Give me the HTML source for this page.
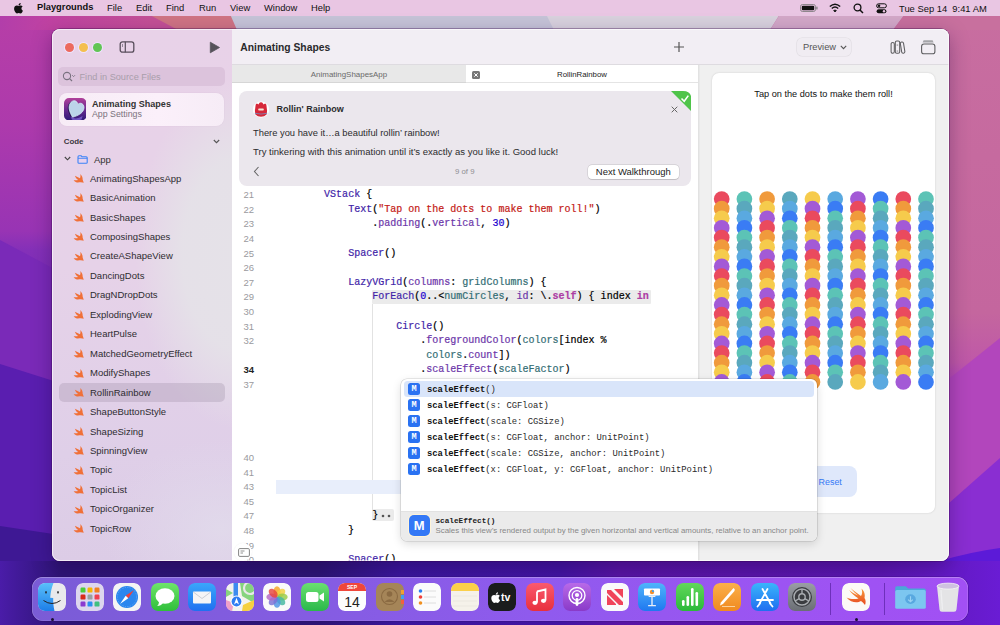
<!DOCTYPE html>
<html><head><meta charset="utf-8">
<style>
*{margin:0;padding:0;box-sizing:border-box}
html,body{width:1000px;height:625px;overflow:hidden;font-family:"Liberation Sans",sans-serif;}
body{position:relative;background:#6a2ab0}
.abs{position:absolute}
#wall{position:absolute;left:0;top:0;width:1000px;height:625px}
#menubar{position:absolute;left:0;top:0;width:1000px;height:16px;background:#e9c6e3;font-size:9.4px;color:#111}
#menubar span{position:absolute;top:2.3px;white-space:nowrap;font-size:9.4px}
#win{position:absolute;left:52px;top:29px;width:897px;height:532px;border-radius:8px;overflow:hidden;background:#fff;box-shadow:0 0 0 0.7px rgba(50,0,70,.45),0 6px 20px rgba(30,0,60,.35)}
#winborder{position:absolute;left:0;top:0;width:897px;height:532px;border-radius:8px;border:1px solid rgba(255,255,255,.6);pointer-events:none}
#side{position:absolute;left:0;top:0;width:180px;height:532px;background:radial-gradient(ellipse 105px 175px at 188px 225px,rgba(229,226,232,1) 0%,rgba(229,226,232,.92) 55%,rgba(229,226,232,0) 100%),radial-gradient(ellipse 120px 90px at 170px 500px,rgba(226,220,236,.8) 0%,rgba(226,220,236,0) 100%),linear-gradient(180deg,#e8d2e8 0%,#e6d2e8 45%,#dfcfe8 80%,#dccce6 100%)}
#editor{position:absolute;left:180px;top:0;width:466px;height:532px;background:#fff}
#preview{position:absolute;left:646px;top:0;width:251px;height:532px;background:#f0f0f0;box-shadow:inset 1.5px 0 0 #e2e2e2}
.tb{position:absolute;left:0;top:0;height:36px;background:#f2eef4;border-bottom:1px solid #dedbe0}
.mono{font-family:"Liberation Mono",monospace}
#dock{position:absolute;left:32px;top:577px;width:936px;height:43.5px;border-radius:11px;background:linear-gradient(90deg,#7a5cd6 0%,#865ce4 35%,#905aee 55%,#9c54f2 80%,#a250f4 100%);box-shadow:inset 0 0.8px 0 rgba(255,255,255,.25),inset 0 0 0 0.6px rgba(255,255,255,.2),0 0 0 0.6px rgba(40,10,90,.4)}
.ic{position:absolute;top:6px;width:28px;height:28px;border-radius:7px;overflow:hidden}
.tl{position:absolute;top:13.7px;width:9px;height:9px;margin-left:0.5px;border-radius:50%;box-shadow:0 0 0 1px rgba(238,228,255,.95)}
.row{position:absolute;left:0;width:180px;height:19px}
.row .sw{position:absolute;left:21px;top:5px;width:11.3px;height:9.2px}
.row span{position:absolute;left:38px;top:3.7px;font-size:9.5px;color:#2e2c30;white-space:nowrap}
#card{position:absolute;left:7px;top:62px;width:452px;height:95px;border-radius:8px;background:#ebe7ed}
.ln{position:absolute;left:0;width:22px;text-align:right;font-size:9.5px;color:#9a9a9e;height:14.6px;line-height:14.6px}
.ln.b{color:#222;font-weight:bold}
.cl{position:absolute;left:44px;font-size:10.02px;color:#000;white-space:pre;height:14.6px;line-height:14.6px;-webkit-text-stroke:0.2px currentColor}
.t{color:#3f1fa8}.m{color:#6c36a9}.v{color:#326d74}.k{color:#ad3da4;font-weight:bold}.n{color:#1c00cf}.s{color:#c41a16}
#popup{position:absolute;left:400.5px;top:378.5px;width:416px;height:162px;border-radius:6px;background:#fff;overflow:hidden;box-shadow:0 0 0 0.6px rgba(0,0,0,.16),0 3px 10px rgba(0,0,0,.14)}
.mi{position:absolute;left:7.5px;width:12px;height:12px;border-radius:2.5px;background:#2a72f2;color:#fff;font-family:"Liberation Mono",monospace;font-size:8.5px;font-weight:bold;text-align:center;line-height:12px}
.pt{position:absolute;left:26.5px;top:0;font-size:8.84px;color:#2a2a2a;white-space:pre;line-height:12px;margin-top:1px}
.pt b{color:#111}
</style></head>
<body>
<svg id="wall" viewBox="0 0 1000 625" preserveAspectRatio="none">
  <defs>
    <linearGradient id="gl" x1="0" y1="0" x2="0" y2="625" gradientUnits="userSpaceOnUse">
      <stop offset="0" stop-color="#b83fa6"/>
      <stop offset="0.2" stop-color="#ad3aac"/>
      <stop offset="0.37" stop-color="#9834b4"/>
      <stop offset="0.4" stop-color="#8430b8"/>
      <stop offset="0.56" stop-color="#6c26b4"/>
      <stop offset="0.6" stop-color="#5a1eb0"/>
      <stop offset="0.84" stop-color="#4a1aa4"/>
      <stop offset="0.9" stop-color="#3a1690"/>
      <stop offset="1" stop-color="#2a1270"/>
    </linearGradient>
    <linearGradient id="gr" x1="0" y1="0" x2="0" y2="625" gradientUnits="userSpaceOnUse">
      <stop offset="0" stop-color="#c86ea0"/>
      <stop offset="0.5" stop-color="#c4669e"/>
      <stop offset="0.58" stop-color="#bf58a8"/>
      <stop offset="0.62" stop-color="#b042c0"/>
      <stop offset="0.76" stop-color="#8c2ad4"/>
      <stop offset="0.88" stop-color="#6420d6"/>
      <stop offset="1" stop-color="#5418d2"/>
    </linearGradient>
    <linearGradient id="gb" x1="0" y1="0" x2="1000" y2="0" gradientUnits="userSpaceOnUse">
      <stop offset="0" stop-color="#4a1ca8"/>
      <stop offset="0.06" stop-color="#2e1476"/>
      <stop offset="0.32" stop-color="#2c1474"/>
      <stop offset="0.4" stop-color="#3a169c"/>
      <stop offset="0.56" stop-color="#4214a2"/>
      <stop offset="0.62" stop-color="#5814a4"/>
      <stop offset="0.88" stop-color="#5a16b0"/>
      <stop offset="1" stop-color="#6a1cd4"/>
    </linearGradient>
    <linearGradient id="gt" x1="0" y1="0" x2="1000" y2="0" gradientUnits="userSpaceOnUse">
      <stop offset="0" stop-color="#b23eaa"/>
      <stop offset="0.05" stop-color="#c042a2"/>
      <stop offset="0.15" stop-color="#c45096"/>
    </linearGradient>
  </defs>
  <rect x="0" y="0" width="500" height="625" fill="url(#gl)"/>
  <rect x="500" y="0" width="500" height="625" fill="url(#gr)"/>
  <path d="M0,240 L60,272 L60,625 L0,625 Z" fill="#7a2ab8"/>
  <path d="M0,364 L60,383 L60,625 L0,625 Z" fill="#5a1eb0"/>
  <path d="M0,526 L60,535 L60,625 L0,625 Z" fill="#3e1894"/>
  <path d="M940,386 L1000,338 L1000,625 L940,625 Z" fill="#b246bc"/>
  <path d="M940,511 L1000,458 L1000,625 L940,625 Z" fill="#8a2ed2"/>
  <path d="M940,561 Q970,552 1000,548 L1000,625 L940,625 Z" fill="#5c1ad8"/>
  <rect x="0" y="561" width="1000" height="64" fill="url(#gb)"/>
  <rect x="0" y="14" width="240" height="16" fill="url(#gt)"/>
  <path d="M148,14 L232,14 L240,30 L178,30 Z" fill="#d07484"/>
  <path d="M230,14 L548,14 L556,30 L237,30 Z" fill="#c6c4d8"/>
  <path d="M546,14 L780,14 L770,30 L554,30 Z" fill="#d9d2de"/>
  <path d="M780,14 L905,14 L893,30 L770,30 Z" fill="#d3a8c8"/>
  <path d="M905,14 L1000,14 L1000,30 L893,30 Z" fill="#c8709e"/>
</svg>

<div id="menubar">
  <svg class="abs" style="left:14px;top:3px" width="9" height="11" viewBox="0 0 384 470"><path transform="translate(0,-32)" d="M318.7 268.7c-.2-36.7 16.4-64.4 50-84.8-18.8-26.9-47.2-41.7-84.7-44.6-35.5-2.8-74.3 20.7-88.5 20.7-15 0-49.4-19.7-76.4-19.7C63.3 141.2 4 184.8 4 273.5q0 39.3 14.4 81.2c12.8 36.7 59 126.7 107.2 125.2 25.2-.6 43-17.9 75.8-17.9 31.8 0 48.3 17.9 76.4 17.9 48.6-.7 90.4-82.5 102.6-119.3-65.2-30.7-61.7-90-61.7-91.9zm-56.6-164.2c27.3-32.4 24.8-61.9 24-72.5-24.1 1.4-52 16.4-67.9 34.9-17.5 19.8-27.8 44.3-25.6 71.9 26.1 2 49.9-11.4 69.5-34.3z" fill="#111"/></svg>
  <span style="left:37px;font-weight:bold;font-size:9.3px">Playgrounds</span>
  <span style="left:107px">File</span>
  <span style="left:136px">Edit</span>
  <span style="left:166px">Find</span>
  <span style="left:199px">Run</span>
  <span style="left:230px">View</span>
  <span style="left:264px">Window</span>
  <span style="left:311px">Help</span>
  <svg class="abs" style="left:800px;top:4px" width="18" height="8" viewBox="0 0 18 8"><rect x="0.5" y="0.5" width="15" height="7" rx="2" fill="none" stroke="#777" stroke-width="0.8"/><rect x="1.8" y="1.8" width="12.4" height="4.4" rx="1" fill="#111"/><rect x="16.3" y="2.6" width="1.2" height="2.8" rx="0.5" fill="#777"/></svg>
  <svg class="abs" style="left:829px;top:3px" width="12" height="10" viewBox="0 0 12 10"><path d="M0.8,3.6 Q6,-1 11.2,3.6" fill="none" stroke="#111" stroke-width="1.4"/><path d="M2.8,5.6 Q6,2.6 9.2,5.6" fill="none" stroke="#111" stroke-width="1.4"/><path d="M4.6,7.6 L6,9 L7.4,7.6 Q6,6.4 4.6,7.6 Z" fill="#111" stroke="#111" stroke-width="0.8"/></svg>
  <svg class="abs" style="left:853px;top:3px" width="11" height="11" viewBox="0 0 11 11"><circle cx="4.5" cy="4.5" r="3.4" fill="none" stroke="#111" stroke-width="1.3"/><path d="M7,7 L10,10" stroke="#111" stroke-width="1.5"/></svg>
  <svg class="abs" style="left:876px;top:3px" width="11" height="11" viewBox="0 0 11 11"><rect x="0.6" y="0.8" width="9.8" height="4" rx="2" fill="none" stroke="#111" stroke-width="1"/><circle cx="3" cy="2.8" r="1.3" fill="#111"/><rect x="0.6" y="6.2" width="9.8" height="4" rx="2" fill="#111"/><circle cx="8" cy="8.2" r="1.2" fill="#e9c4e2"/></svg>
  <span style="left:899px;font-size:9.4px;top:2.8px">Tue Sep 14&nbsp;&nbsp;9:41 AM</span>
</div>

<div id="win">
  <div id="side">
    <svg width="0" height="0" style="position:absolute"><defs>
      <path id="swift" fill="#f07038" d="M0.6,6 C2,8 4,8.6 6.5,8.2 C8,8 9.5,8.2 10.5,8.6 C10.2,7.6 9.6,6.5 9.4,5.5 C9.6,3.4 8.6,1.4 7.1,0 C7.4,1.4 7.4,2.8 6.8,4.1 C5.2,3 3.4,2.4 1.8,1.6 C2.4,3.4 3.6,4.8 5.1,5.8 C3.6,6.1 2,6.2 0.6,6 Z"/>
    </defs></svg>
    <div class="tl" style="left:12.4px;background:#ec6a5e"></div>
    <div class="tl" style="left:26.4px;background:#f4bf4f"></div>
    <div class="tl" style="left:40.4px;background:#61c554"></div>
    <svg class="abs" style="left:67px;top:11.5px" width="16" height="12" viewBox="0 0 16 12"><rect x="1.2" y="0.8" width="13.6" height="10.4" rx="2.3" fill="none" stroke="#594f5c" stroke-width="1.3"/><line x1="6.3" y1="0.8" x2="6.3" y2="11.2" stroke="#594f5c" stroke-width="1.2"/><line x1="3.5" y1="3" x2="3.5" y2="6" stroke="#8a8090" stroke-width="0.9"/></svg>
    <svg class="abs" style="left:157px;top:12px" width="12" height="13" viewBox="0 0 12 13"><path d="M1.3,1.2 L10.5,6.5 L1.3,11.8 Z" fill="#56525a" stroke="#56525a" stroke-width="0.8" stroke-linejoin="round"/></svg>
    <div class="abs" style="left:6px;top:38px;width:167px;height:19px;border-radius:5px;background:rgba(160,120,160,.16)"></div>
    <svg class="abs" style="left:10px;top:42px" width="14" height="12" viewBox="0 0 14 12"><circle cx="5" cy="5" r="3.6" fill="none" stroke="#7a7280" stroke-width="1.1"/><line x1="7.6" y1="7.6" x2="10" y2="10" stroke="#7a7280" stroke-width="1.2"/><path d="M10.2,4.2 L11.6,5.6 L13,4.2" fill="none" stroke="#7a7280" stroke-width="0.9"/></svg>
    <div class="abs" style="left:27.5px;top:43px;font-size:9.2px;color:#a99eab;white-space:nowrap">Find in Source Files</div>
    <div class="abs" style="left:7px;top:63.5px;width:165px;height:33px;border-radius:8px;background:linear-gradient(90deg,#f7ecf6,#fbf0fa 60%,#f6ecf6);box-shadow:0 0 1px rgba(120,80,120,.2)"></div>
    <svg class="abs" style="left:11.8px;top:68.8px" width="22.5" height="22.5" viewBox="0 0 23 23"><defs><linearGradient id="aig" x1="0" y1="0" x2="0" y2="1"><stop offset="0" stop-color="#b0409a"/><stop offset="0.5" stop-color="#6a2a90"/><stop offset="1" stop-color="#2e1a78"/></linearGradient></defs><rect x="0" y="0" width="23" height="23" rx="5.2" fill="url(#aig)"/><g transform="translate(11.8,12) rotate(22) scale(0.95,1.1) translate(-8,-7.5)"><path d="M8,15 C3,11.5 0,8.5 0,4.8 C0,2 2,0 4.4,0 C6,0 7.3,0.9 8,2.2 C8.7,0.9 10,0 11.6,0 C14,0 16,2 16,4.8 C16,8.5 13,11.5 8,15 Z" fill="#2a1458" transform="translate(-1.2,0.8)"/><path d="M8,15 C3,11.5 0,8.5 0,4.8 C0,2 2,0 4.4,0 C6,0 7.3,0.9 8,2.2 C8.7,0.9 10,0 11.6,0 C14,0 16,2 16,4.8 C16,8.5 13,11.5 8,15 Z" fill="#bcd4ea" stroke="#d8f2fa" stroke-width="0.7"/></g><path d="M7,19 Q12,23 19,18.5 L18,22 Q12,24 8,22 Z" fill="#8a6ae0" opacity=".7"/></svg>
    <div class="abs" style="left:40px;top:70px;font-size:9.05px;font-weight:bold;color:#333;white-space:nowrap">Animating Shapes</div>
    <div class="abs" style="left:40px;top:79.5px;font-size:8.8px;color:#7a727c;white-space:nowrap">App Settings</div>
    <div class="abs" style="left:11.7px;top:108px;font-size:7.9px;font-weight:bold;color:#3c3840">Code</div>
    <svg class="abs" style="left:160.5px;top:110px" width="7" height="5" viewBox="0 0 7 5"><path d="M0.8,1 L3.5,3.7 L6.2,1" fill="none" stroke="#555" stroke-width="1.1"/></svg>
    <svg class="abs" style="left:12px;top:127px" width="7" height="5" viewBox="0 0 7 5"><path d="M0.8,1 L3.5,3.8 L6.2,1" fill="none" stroke="#444" stroke-width="1.1"/></svg>
    <svg class="abs" style="left:25px;top:125.5px" width="11" height="9" viewBox="0 0 11 9"><path d="M1,2 C1,1.2 1.4,0.8 2,0.8 L4.2,0.8 L5,1.8 L9.2,1.8 C9.8,1.8 10.2,2.2 10.2,2.8 L10.2,7.4 C10.2,8 9.8,8.3 9.2,8.3 L2,8.3 C1.4,8.3 1,8 1,7.4 Z" fill="#e8d2ee" stroke="#3b82f6" stroke-width="1.1"/><line x1="1" y1="3.3" x2="10.2" y2="3.3" stroke="#3b82f6" stroke-width="0.9"/></svg>
    <div class="abs" style="left:42px;top:125px;font-size:9.5px;color:#333">App</div>
    <div class="abs" style="left:6.5px;top:354px;width:166px;height:19px;border-radius:5px;background:rgba(120,105,130,.2)"></div>
<div class="row" style="top:140.0px"><svg class="sw" viewBox="0 0 11 9"><use href="#swift"/></svg><span>AnimatingShapesApp</span></div>
<div class="row" style="top:159.4px"><svg class="sw" viewBox="0 0 11 9"><use href="#swift"/></svg><span>BasicAnimation</span></div>
<div class="row" style="top:178.9px"><svg class="sw" viewBox="0 0 11 9"><use href="#swift"/></svg><span>BasicShapes</span></div>
<div class="row" style="top:198.3px"><svg class="sw" viewBox="0 0 11 9"><use href="#swift"/></svg><span>ComposingShapes</span></div>
<div class="row" style="top:217.8px"><svg class="sw" viewBox="0 0 11 9"><use href="#swift"/></svg><span>CreateAShapeView</span></div>
<div class="row" style="top:237.2px"><svg class="sw" viewBox="0 0 11 9"><use href="#swift"/></svg><span>DancingDots</span></div>
<div class="row" style="top:256.7px"><svg class="sw" viewBox="0 0 11 9"><use href="#swift"/></svg><span>DragNDropDots</span></div>
<div class="row" style="top:276.1px"><svg class="sw" viewBox="0 0 11 9"><use href="#swift"/></svg><span>ExplodingView</span></div>
<div class="row" style="top:295.6px"><svg class="sw" viewBox="0 0 11 9"><use href="#swift"/></svg><span>HeartPulse</span></div>
<div class="row" style="top:315.0px"><svg class="sw" viewBox="0 0 11 9"><use href="#swift"/></svg><span>MatchedGeometryEffect</span></div>
<div class="row" style="top:334.5px"><svg class="sw" viewBox="0 0 11 9"><use href="#swift"/></svg><span>ModifyShapes</span></div>
<div class="row" style="top:353.9px"><svg class="sw" viewBox="0 0 11 9"><use href="#swift"/></svg><span>RollinRainbow</span></div>
<div class="row" style="top:373.4px"><svg class="sw" viewBox="0 0 11 9"><use href="#swift"/></svg><span>ShapeButtonStyle</span></div>
<div class="row" style="top:392.9px"><svg class="sw" viewBox="0 0 11 9"><use href="#swift"/></svg><span>ShapeSizing</span></div>
<div class="row" style="top:412.3px"><svg class="sw" viewBox="0 0 11 9"><use href="#swift"/></svg><span>SpinningView</span></div>
<div class="row" style="top:431.8px"><svg class="sw" viewBox="0 0 11 9"><use href="#swift"/></svg><span>Topic</span></div>
<div class="row" style="top:451.2px"><svg class="sw" viewBox="0 0 11 9"><use href="#swift"/></svg><span>TopicList</span></div>
<div class="row" style="top:470.6px"><svg class="sw" viewBox="0 0 11 9"><use href="#swift"/></svg><span>TopicOrganizer</span></div>
<div class="row" style="top:490.1px"><svg class="sw" viewBox="0 0 11 9"><use href="#swift"/></svg><span>TopicRow</span></div>
  </div>
  <div id="editor">
    <div class="tb" style="width:466px"></div>
    <div class="abs" style="left:8.3px;top:13px;font-size:10.3px;font-weight:bold;color:#2a2a2c;white-space:nowrap">Animating Shapes</div>
    <svg class="abs" style="left:441px;top:12px" width="12" height="12" viewBox="0 0 12 12"><path d="M6,1 V11 M1,6 H11" stroke="#555" stroke-width="1.2"/></svg>
    <div class="abs" style="left:0;top:36px;width:234px;height:18px;background:#e8e8e8;border-bottom:1.5px solid #d6d6d6"></div>
    <div class="abs" style="left:234px;top:36px;width:232px;height:18px;background:#fff;border-bottom:1px solid #e4e4e4"></div>
    <div class="abs" style="left:0;top:41px;width:234px;text-align:center;font-size:7.95px;color:#6a6a6a">AnimatingShapesApp</div>
    <div class="abs" style="left:234px;top:41px;width:232px;text-align:center;font-size:7.8px;color:#222">RollinRainbow</div>
    <svg class="abs" style="left:240px;top:42px" width="8" height="8" viewBox="0 0 8 8"><rect x="0" y="0" width="8" height="8" rx="1.5" fill="#777"/><path d="M2.3,2.3 L5.7,5.7 M5.7,2.3 L2.3,5.7" stroke="#fff" stroke-width="1"/></svg>
    <div id="card">
      <svg class="abs" style="left:431.5px;top:0" width="20.5" height="20.5" viewBox="0 0 20.5 20.5"><path d="M0,0 H12 Q20.5,0 20.5,8.5 V20.5 Z" fill="#4fc44a"/><path d="M10.5,7.5 L13.2,10.2 L17.3,4.6" fill="none" stroke="#fff" stroke-width="1.6"/></svg>
      <svg class="abs" style="left:432px;top:15px" width="7" height="7" viewBox="0 0 7 7"><path d="M0.7,0.7 L6.3,6.3 M6.3,0.7 L0.7,6.3" stroke="#666" stroke-width="1"/></svg>
      <svg class="abs" style="left:14px;top:10px" width="16" height="17" viewBox="0 0 16 17"><circle cx="8" cy="8.6" r="8.1" fill="#fff"/><path d="M2.5,5 Q2.3,3 3.8,2.4 Q5,2.6 5.4,3.6 Q6.5,1 8,1.2 Q9.5,1 10.6,3.6 Q11,2.6 12.2,2.4 Q13.7,3 13.5,5 Q14.6,10 13.6,13.6 Q11.5,15.8 8,15.8 Q4.5,15.8 2.4,13.6 Q1.4,10 2.5,5 Z" fill="#d6283a"/><rect x="5.2" y="7.6" width="5.6" height="2" rx="0.8" fill="#f2e6d6"/><path d="M1.8,12.3 Q8,13.8 14.2,12.3" stroke="#7a88b8" stroke-width="1" fill="none" opacity=".85"/></svg>
      <div class="abs" style="left:37.5px;top:12.5px;font-size:9px;font-weight:bold;color:#2c2c2e;white-space:nowrap">Rollin' Rainbow</div>
      <div class="abs" style="left:14px;top:36.7px;font-size:9.36px;color:#2c2c2e;white-space:nowrap">There you have it…a beautiful rollin’ rainbow!</div>
      <div class="abs" style="left:14px;top:55px;font-size:9.52px;color:#2c2c2e;white-space:nowrap">Try tinkering with this animation until it’s exactly as you like it. Good luck!</div>
      <svg class="abs" style="left:14px;top:75px" width="7" height="11" viewBox="0 0 7 11"><path d="M5.5,1 L1.5,5.5 L5.5,10" fill="none" stroke="#666" stroke-width="1.1"/></svg>
      <div class="abs" style="left:216px;top:76px;font-size:7.8px;color:#8e8e93;white-space:nowrap">9 of 9</div>
      <div class="abs" style="left:349px;top:73.7px;width:90.5px;height:14.8px;border-radius:4px;background:#fff;box-shadow:0 0 0 0.5px rgba(0,0,0,.16),0 0.5px 0.8px rgba(0,0,0,.1);font-size:9.47px;color:#222;text-align:center;line-height:13.6px">Next Walkthrough</div>
    </div>
    <div class="abs" style="left:140px;top:260.5px;width:279px;height:14px;background:#ebebeb;border-radius:1px"></div>
    <div class="abs" style="left:140px;top:274.5px;width:1px;height:206px;background:#e2e2e2"></div>
    <div class="abs" style="left:44px;top:450.5px;width:170px;height:14.3px;background:#e8eefb"></div>
    <div class="abs" style="left:140px;top:480px;width:22px;height:12px;background:#ebebeb;border-radius:2px"></div>
    <svg class="abs" style="left:148px;top:484.5px" width="12" height="4" viewBox="0 0 12 4"><circle cx="3" cy="2" r="1.3" fill="#555"/><circle cx="9" cy="2" r="1.3" fill="#555"/></svg>
<div class="ln" style="top:159.2px">21</div>
<div class="cl mono" style="top:159.2px">        <span class="t">VStack</span> {</div>
<div class="ln" style="top:173.8px">22</div>
<div class="cl mono" style="top:173.8px">            <span class="t">Text</span>(<span class="s">"Tap on the dots to make them roll!"</span>)</div>
<div class="ln" style="top:188.4px">23</div>
<div class="cl mono" style="top:188.4px">                .<span class="m">padding</span>(.<span class="m">vertical</span>, <span class="n">30</span>)</div>
<div class="ln" style="top:203.0px">24</div>
<div class="ln" style="top:217.6px">25</div>
<div class="cl mono" style="top:217.6px">            <span class="t">Spacer</span>()</div>
<div class="ln" style="top:232.2px">26</div>
<div class="ln" style="top:246.8px">27</div>
<div class="cl mono" style="top:246.8px">            <span class="t">LazyVGrid</span>(<span class="m">columns</span>: <span class="v">gridColumns</span>) {</div>
<div class="ln" style="top:261.4px">29</div>
<div class="cl mono" style="top:261.4px">                <span class="t">ForEach</span>(<span class="n">0</span>..&lt;<span class="v">numCircles</span>, <span class="m">id</span>: \.<span class="k">self</span>) { index <span class="k">in</span></div>
<div class="ln" style="top:276.0px">30</div>
<div class="ln" style="top:290.6px">31</div>
<div class="cl mono" style="top:290.6px">                    <span class="t">Circle</span>()</div>
<div class="ln" style="top:305.2px">32</div>
<div class="cl mono" style="top:305.2px">                        .<span class="m">foregroundColor</span>(<span class="v">colors</span>[index %</div>
<div class="cl mono" style="top:319.8px">                         <span class="v">colors</span>.<span class="m">count</span>])</div>
<div class="ln b" style="top:334.4px">34</div>
<div class="cl mono" style="top:334.4px">                        .<span class="m">scaleEffect</span>(<span class="v">scaleFactor</span>)</div>
<div class="ln" style="top:349.0px">37</div>
<div class="ln" style="top:422.0px">40</div>
<div class="ln" style="top:436.6px">41</div>
<div class="ln" style="top:451.2px">43</div>
<div class="ln" style="top:465.8px">45</div>
<div class="ln" style="top:480.4px">47</div>
<div class="cl mono" style="top:480.4px">                }</div>
<div class="ln" style="top:495.0px">48</div>
<div class="cl mono" style="top:495.0px">            }</div>
<div class="ln" style="top:509.6px">49</div>
<div class="ln" style="top:524.2px">50</div>
<div class="cl mono" style="top:524.2px">            <span class="t">Spacer</span>()</div>
    <div class="abs" style="left:2px;top:513.5px;width:18px;height:18px;border-radius:50%;background:#fff;box-shadow:0 0 1.5px rgba(0,0,0,.08)"></div><svg class="abs" style="left:6px;top:518.5px" width="12" height="9" viewBox="0 0 12 9"><rect x="0.6" y="0.6" width="10.8" height="7.8" rx="1.2" fill="none" stroke="#777" stroke-width="0.9"/><path d="M2.5,3 H6.5 M2.5,5 H5" stroke="#777" stroke-width="0.8"/></svg>
  </div>
  <div id="preview">
    <div class="tb" style="width:251px"></div>
    <div class="abs" style="left:99px;top:8.7px;width:53.6px;height:18.7px;border-radius:5px;background:#f0ecf2;box-shadow:0 0 0 0.6px rgba(0,0,0,.08)"></div>
    <div class="abs" style="left:105px;top:13px;font-size:9.3px;color:#555">Preview</div>
    <svg class="abs" style="left:142px;top:16px" width="7" height="5" viewBox="0 0 7 5"><path d="M0.8,0.8 L3.5,3.6 L6.2,0.8" fill="none" stroke="#555" stroke-width="1.1"/></svg>
    <svg class="abs" style="left:192px;top:11px" width="17" height="14" viewBox="0 0 17 14"><g fill="none" stroke="#5e5e60" stroke-width="1.05"><rect x="1.1" y="2.4" width="3.2" height="10.9" rx="1.6"/><rect x="5.3" y="0.9" width="4.4" height="12.4" rx="1.5"/><rect x="11" y="2" width="3.2" height="11.3" rx="1.6" transform="rotate(-9 12.6 7.6)"/></g><rect x="6.6" y="4.6" width="1.6" height="0.9" fill="#7a7a7c"/><rect x="6.6" y="10.6" width="1.6" height="0.9" fill="#7a7a7c"/></svg>
    <svg class="abs" style="left:222px;top:10px" width="16" height="16" viewBox="0 0 16 16"><path d="M3.6,1.2 H12.6 L13.6,3.6 H2.6 Z" fill="#a4a4a8"/><rect x="1.6" y="5" width="13.3" height="9.8" rx="2.4" fill="none" stroke="#5e5e60" stroke-width="1.1"/></svg>
    <div class="abs" style="left:14px;top:44px;width:223px;height:440px;background:#fff;border-radius:7px;box-shadow:0 0 2px rgba(0,0,0,.16);overflow:hidden">
      <div class="abs" style="left:0;top:16px;width:223px;text-align:center;font-size:9.2px;color:#111">Tap on the dots to make them roll!</div>
<svg class="abs" style="left:0;top:0" width="223" height="440"><circle cx="9.70" cy="126.00" r="7.85" fill="#ea4a5e"/><circle cx="32.40" cy="126.00" r="7.85" fill="#5cc3b6"/><circle cx="55.10" cy="126.00" r="7.85" fill="#f09a3c"/><circle cx="77.80" cy="126.00" r="7.85" fill="#5aa8bd"/><circle cx="100.50" cy="126.00" r="7.85" fill="#f6cb4c"/><circle cx="123.20" cy="126.00" r="7.85" fill="#5aa9e0"/><circle cx="145.90" cy="126.00" r="7.85" fill="#a35ad6"/><circle cx="168.60" cy="126.00" r="7.85" fill="#3a7cf4"/><circle cx="191.30" cy="126.00" r="7.85" fill="#ea4a5e"/><circle cx="214.00" cy="126.00" r="7.85" fill="#5cc3b6"/><circle cx="9.70" cy="135.63" r="7.85" fill="#f09a3c"/><circle cx="32.40" cy="135.63" r="7.85" fill="#5aa8bd"/><circle cx="55.10" cy="135.63" r="7.85" fill="#f6cb4c"/><circle cx="77.80" cy="135.63" r="7.85" fill="#5aa9e0"/><circle cx="100.50" cy="135.63" r="7.85" fill="#a35ad6"/><circle cx="123.20" cy="135.63" r="7.85" fill="#3a7cf4"/><circle cx="145.90" cy="135.63" r="7.85" fill="#ea4a5e"/><circle cx="168.60" cy="135.63" r="7.85" fill="#5cc3b6"/><circle cx="191.30" cy="135.63" r="7.85" fill="#f09a3c"/><circle cx="214.00" cy="135.63" r="7.85" fill="#5aa8bd"/><circle cx="9.70" cy="145.26" r="7.85" fill="#f6cb4c"/><circle cx="32.40" cy="145.26" r="7.85" fill="#5aa9e0"/><circle cx="55.10" cy="145.26" r="7.85" fill="#a35ad6"/><circle cx="77.80" cy="145.26" r="7.85" fill="#3a7cf4"/><circle cx="100.50" cy="145.26" r="7.85" fill="#ea4a5e"/><circle cx="123.20" cy="145.26" r="7.85" fill="#5cc3b6"/><circle cx="145.90" cy="145.26" r="7.85" fill="#f09a3c"/><circle cx="168.60" cy="145.26" r="7.85" fill="#5aa8bd"/><circle cx="191.30" cy="145.26" r="7.85" fill="#f6cb4c"/><circle cx="214.00" cy="145.26" r="7.85" fill="#5aa9e0"/><circle cx="9.70" cy="154.89" r="7.85" fill="#a35ad6"/><circle cx="32.40" cy="154.89" r="7.85" fill="#3a7cf4"/><circle cx="55.10" cy="154.89" r="7.85" fill="#ea4a5e"/><circle cx="77.80" cy="154.89" r="7.85" fill="#5cc3b6"/><circle cx="100.50" cy="154.89" r="7.85" fill="#f09a3c"/><circle cx="123.20" cy="154.89" r="7.85" fill="#5aa8bd"/><circle cx="145.90" cy="154.89" r="7.85" fill="#f6cb4c"/><circle cx="168.60" cy="154.89" r="7.85" fill="#5aa9e0"/><circle cx="191.30" cy="154.89" r="7.85" fill="#a35ad6"/><circle cx="214.00" cy="154.89" r="7.85" fill="#3a7cf4"/><circle cx="9.70" cy="164.52" r="7.85" fill="#ea4a5e"/><circle cx="32.40" cy="164.52" r="7.85" fill="#5cc3b6"/><circle cx="55.10" cy="164.52" r="7.85" fill="#f09a3c"/><circle cx="77.80" cy="164.52" r="7.85" fill="#5aa8bd"/><circle cx="100.50" cy="164.52" r="7.85" fill="#f6cb4c"/><circle cx="123.20" cy="164.52" r="7.85" fill="#5aa9e0"/><circle cx="145.90" cy="164.52" r="7.85" fill="#a35ad6"/><circle cx="168.60" cy="164.52" r="7.85" fill="#3a7cf4"/><circle cx="191.30" cy="164.52" r="7.85" fill="#ea4a5e"/><circle cx="214.00" cy="164.52" r="7.85" fill="#5cc3b6"/><circle cx="9.70" cy="174.15" r="7.85" fill="#f09a3c"/><circle cx="32.40" cy="174.15" r="7.85" fill="#5aa8bd"/><circle cx="55.10" cy="174.15" r="7.85" fill="#f6cb4c"/><circle cx="77.80" cy="174.15" r="7.85" fill="#5aa9e0"/><circle cx="100.50" cy="174.15" r="7.85" fill="#a35ad6"/><circle cx="123.20" cy="174.15" r="7.85" fill="#3a7cf4"/><circle cx="145.90" cy="174.15" r="7.85" fill="#ea4a5e"/><circle cx="168.60" cy="174.15" r="7.85" fill="#5cc3b6"/><circle cx="191.30" cy="174.15" r="7.85" fill="#f09a3c"/><circle cx="214.00" cy="174.15" r="7.85" fill="#5aa8bd"/><circle cx="9.70" cy="183.78" r="7.85" fill="#f6cb4c"/><circle cx="32.40" cy="183.78" r="7.85" fill="#5aa9e0"/><circle cx="55.10" cy="183.78" r="7.85" fill="#a35ad6"/><circle cx="77.80" cy="183.78" r="7.85" fill="#3a7cf4"/><circle cx="100.50" cy="183.78" r="7.85" fill="#ea4a5e"/><circle cx="123.20" cy="183.78" r="7.85" fill="#5cc3b6"/><circle cx="145.90" cy="183.78" r="7.85" fill="#f09a3c"/><circle cx="168.60" cy="183.78" r="7.85" fill="#5aa8bd"/><circle cx="191.30" cy="183.78" r="7.85" fill="#f6cb4c"/><circle cx="214.00" cy="183.78" r="7.85" fill="#5aa9e0"/><circle cx="9.70" cy="193.41" r="7.85" fill="#a35ad6"/><circle cx="32.40" cy="193.41" r="7.85" fill="#3a7cf4"/><circle cx="55.10" cy="193.41" r="7.85" fill="#ea4a5e"/><circle cx="77.80" cy="193.41" r="7.85" fill="#5cc3b6"/><circle cx="100.50" cy="193.41" r="7.85" fill="#f09a3c"/><circle cx="123.20" cy="193.41" r="7.85" fill="#5aa8bd"/><circle cx="145.90" cy="193.41" r="7.85" fill="#f6cb4c"/><circle cx="168.60" cy="193.41" r="7.85" fill="#5aa9e0"/><circle cx="191.30" cy="193.41" r="7.85" fill="#a35ad6"/><circle cx="214.00" cy="193.41" r="7.85" fill="#3a7cf4"/><circle cx="9.70" cy="203.04" r="7.85" fill="#ea4a5e"/><circle cx="32.40" cy="203.04" r="7.85" fill="#5cc3b6"/><circle cx="55.10" cy="203.04" r="7.85" fill="#f09a3c"/><circle cx="77.80" cy="203.04" r="7.85" fill="#5aa8bd"/><circle cx="100.50" cy="203.04" r="7.85" fill="#f6cb4c"/><circle cx="123.20" cy="203.04" r="7.85" fill="#5aa9e0"/><circle cx="145.90" cy="203.04" r="7.85" fill="#a35ad6"/><circle cx="168.60" cy="203.04" r="7.85" fill="#3a7cf4"/><circle cx="191.30" cy="203.04" r="7.85" fill="#ea4a5e"/><circle cx="214.00" cy="203.04" r="7.85" fill="#5cc3b6"/><circle cx="9.70" cy="212.67" r="7.85" fill="#f09a3c"/><circle cx="32.40" cy="212.67" r="7.85" fill="#5aa8bd"/><circle cx="55.10" cy="212.67" r="7.85" fill="#f6cb4c"/><circle cx="77.80" cy="212.67" r="7.85" fill="#5aa9e0"/><circle cx="100.50" cy="212.67" r="7.85" fill="#a35ad6"/><circle cx="123.20" cy="212.67" r="7.85" fill="#3a7cf4"/><circle cx="145.90" cy="212.67" r="7.85" fill="#ea4a5e"/><circle cx="168.60" cy="212.67" r="7.85" fill="#5cc3b6"/><circle cx="191.30" cy="212.67" r="7.85" fill="#f09a3c"/><circle cx="214.00" cy="212.67" r="7.85" fill="#5aa8bd"/><circle cx="9.70" cy="222.30" r="7.85" fill="#f6cb4c"/><circle cx="32.40" cy="222.30" r="7.85" fill="#5aa9e0"/><circle cx="55.10" cy="222.30" r="7.85" fill="#a35ad6"/><circle cx="77.80" cy="222.30" r="7.85" fill="#3a7cf4"/><circle cx="100.50" cy="222.30" r="7.85" fill="#ea4a5e"/><circle cx="123.20" cy="222.30" r="7.85" fill="#5cc3b6"/><circle cx="145.90" cy="222.30" r="7.85" fill="#f09a3c"/><circle cx="168.60" cy="222.30" r="7.85" fill="#5aa8bd"/><circle cx="191.30" cy="222.30" r="7.85" fill="#f6cb4c"/><circle cx="214.00" cy="222.30" r="7.85" fill="#5aa9e0"/><circle cx="9.70" cy="231.93" r="7.85" fill="#a35ad6"/><circle cx="32.40" cy="231.93" r="7.85" fill="#3a7cf4"/><circle cx="55.10" cy="231.93" r="7.85" fill="#ea4a5e"/><circle cx="77.80" cy="231.93" r="7.85" fill="#5cc3b6"/><circle cx="100.50" cy="231.93" r="7.85" fill="#f09a3c"/><circle cx="123.20" cy="231.93" r="7.85" fill="#5aa8bd"/><circle cx="145.90" cy="231.93" r="7.85" fill="#f6cb4c"/><circle cx="168.60" cy="231.93" r="7.85" fill="#5aa9e0"/><circle cx="191.30" cy="231.93" r="7.85" fill="#a35ad6"/><circle cx="214.00" cy="231.93" r="7.85" fill="#3a7cf4"/><circle cx="9.70" cy="241.56" r="7.85" fill="#ea4a5e"/><circle cx="32.40" cy="241.56" r="7.85" fill="#5cc3b6"/><circle cx="55.10" cy="241.56" r="7.85" fill="#f09a3c"/><circle cx="77.80" cy="241.56" r="7.85" fill="#5aa8bd"/><circle cx="100.50" cy="241.56" r="7.85" fill="#f6cb4c"/><circle cx="123.20" cy="241.56" r="7.85" fill="#5aa9e0"/><circle cx="145.90" cy="241.56" r="7.85" fill="#a35ad6"/><circle cx="168.60" cy="241.56" r="7.85" fill="#3a7cf4"/><circle cx="191.30" cy="241.56" r="7.85" fill="#ea4a5e"/><circle cx="214.00" cy="241.56" r="7.85" fill="#5cc3b6"/><circle cx="9.70" cy="251.19" r="7.85" fill="#f09a3c"/><circle cx="32.40" cy="251.19" r="7.85" fill="#5aa8bd"/><circle cx="55.10" cy="251.19" r="7.85" fill="#f6cb4c"/><circle cx="77.80" cy="251.19" r="7.85" fill="#5aa9e0"/><circle cx="100.50" cy="251.19" r="7.85" fill="#a35ad6"/><circle cx="123.20" cy="251.19" r="7.85" fill="#3a7cf4"/><circle cx="145.90" cy="251.19" r="7.85" fill="#ea4a5e"/><circle cx="168.60" cy="251.19" r="7.85" fill="#5cc3b6"/><circle cx="191.30" cy="251.19" r="7.85" fill="#f09a3c"/><circle cx="214.00" cy="251.19" r="7.85" fill="#5aa8bd"/><circle cx="9.70" cy="260.82" r="7.85" fill="#f6cb4c"/><circle cx="32.40" cy="260.82" r="7.85" fill="#5aa9e0"/><circle cx="55.10" cy="260.82" r="7.85" fill="#a35ad6"/><circle cx="77.80" cy="260.82" r="7.85" fill="#3a7cf4"/><circle cx="100.50" cy="260.82" r="7.85" fill="#ea4a5e"/><circle cx="123.20" cy="260.82" r="7.85" fill="#5cc3b6"/><circle cx="145.90" cy="260.82" r="7.85" fill="#f09a3c"/><circle cx="168.60" cy="260.82" r="7.85" fill="#5aa8bd"/><circle cx="191.30" cy="260.82" r="7.85" fill="#f6cb4c"/><circle cx="214.00" cy="260.82" r="7.85" fill="#5aa9e0"/><circle cx="9.70" cy="270.45" r="7.85" fill="#a35ad6"/><circle cx="32.40" cy="270.45" r="7.85" fill="#3a7cf4"/><circle cx="55.10" cy="270.45" r="7.85" fill="#ea4a5e"/><circle cx="77.80" cy="270.45" r="7.85" fill="#5cc3b6"/><circle cx="100.50" cy="270.45" r="7.85" fill="#f09a3c"/><circle cx="123.20" cy="270.45" r="7.85" fill="#5aa8bd"/><circle cx="145.90" cy="270.45" r="7.85" fill="#f6cb4c"/><circle cx="168.60" cy="270.45" r="7.85" fill="#5aa9e0"/><circle cx="191.30" cy="270.45" r="7.85" fill="#a35ad6"/><circle cx="214.00" cy="270.45" r="7.85" fill="#3a7cf4"/><circle cx="9.70" cy="280.08" r="7.85" fill="#ea4a5e"/><circle cx="32.40" cy="280.08" r="7.85" fill="#5cc3b6"/><circle cx="55.10" cy="280.08" r="7.85" fill="#f09a3c"/><circle cx="77.80" cy="280.08" r="7.85" fill="#5aa8bd"/><circle cx="100.50" cy="280.08" r="7.85" fill="#f6cb4c"/><circle cx="123.20" cy="280.08" r="7.85" fill="#5aa9e0"/><circle cx="145.90" cy="280.08" r="7.85" fill="#a35ad6"/><circle cx="168.60" cy="280.08" r="7.85" fill="#3a7cf4"/><circle cx="191.30" cy="280.08" r="7.85" fill="#ea4a5e"/><circle cx="214.00" cy="280.08" r="7.85" fill="#5cc3b6"/><circle cx="9.70" cy="289.71" r="7.85" fill="#f09a3c"/><circle cx="32.40" cy="289.71" r="7.85" fill="#5aa8bd"/><circle cx="55.10" cy="289.71" r="7.85" fill="#f6cb4c"/><circle cx="77.80" cy="289.71" r="7.85" fill="#5aa9e0"/><circle cx="100.50" cy="289.71" r="7.85" fill="#a35ad6"/><circle cx="123.20" cy="289.71" r="7.85" fill="#3a7cf4"/><circle cx="145.90" cy="289.71" r="7.85" fill="#ea4a5e"/><circle cx="168.60" cy="289.71" r="7.85" fill="#5cc3b6"/><circle cx="191.30" cy="289.71" r="7.85" fill="#f09a3c"/><circle cx="214.00" cy="289.71" r="7.85" fill="#5aa8bd"/><circle cx="9.70" cy="299.34" r="7.85" fill="#f6cb4c"/><circle cx="32.40" cy="299.34" r="7.85" fill="#5aa9e0"/><circle cx="55.10" cy="299.34" r="7.85" fill="#a35ad6"/><circle cx="77.80" cy="299.34" r="7.85" fill="#3a7cf4"/><circle cx="100.50" cy="299.34" r="7.85" fill="#ea4a5e"/><circle cx="123.20" cy="299.34" r="7.85" fill="#5cc3b6"/><circle cx="145.90" cy="299.34" r="7.85" fill="#f09a3c"/><circle cx="168.60" cy="299.34" r="7.85" fill="#5aa8bd"/><circle cx="191.30" cy="299.34" r="7.85" fill="#f6cb4c"/><circle cx="214.00" cy="299.34" r="7.85" fill="#5aa9e0"/><circle cx="9.70" cy="308.97" r="7.85" fill="#a35ad6"/><circle cx="32.40" cy="308.97" r="7.85" fill="#3a7cf4"/><circle cx="55.10" cy="308.97" r="7.85" fill="#ea4a5e"/><circle cx="77.80" cy="308.97" r="7.85" fill="#5cc3b6"/><circle cx="100.50" cy="308.97" r="7.85" fill="#f09a3c"/><circle cx="123.20" cy="308.97" r="7.85" fill="#5aa8bd"/><circle cx="145.90" cy="308.97" r="7.85" fill="#f6cb4c"/><circle cx="168.60" cy="308.97" r="7.85" fill="#5aa9e0"/><circle cx="191.30" cy="308.97" r="7.85" fill="#a35ad6"/><circle cx="214.00" cy="308.97" r="7.85" fill="#3a7cf4"/></svg>
      <div class="abs" style="left:78px;top:393px;width:67px;height:31px;border-radius:8px;background:#dfe8fb"></div>
      <div class="abs" style="left:106.6px;top:403.5px;font-size:8.9px;color:#3478f6">Reset</div>
    </div>
  </div>
<div id="winborder"></div>
</div>

<div id="popup">
  <div class="abs" style="left:3px;top:2.5px;width:410.3px;height:16px;border-radius:3.5px;background:#d9e5fa"></div>
<div class="mi" style="top:4.5px">M</div><div class="pt mono" style="top:4.5px"><b>scaleEffect</b>()</div>
<div class="mi" style="top:20.5px">M</div><div class="pt mono" style="top:20.5px"><b>scaleEffect</b>(s: CGFloat)</div>
<div class="mi" style="top:36.5px">M</div><div class="pt mono" style="top:36.5px"><b>scaleEffect</b>(scale: CGSize)</div>
<div class="mi" style="top:52.5px">M</div><div class="pt mono" style="top:52.5px"><b>scaleEffect</b>(s: CGFloat, anchor: UnitPoint)</div>
<div class="mi" style="top:68.5px">M</div><div class="pt mono" style="top:68.5px"><b>scaleEffect</b>(scale: CGSize, anchor: UnitPoint)</div>
<div class="mi" style="top:84.5px">M</div><div class="pt mono" style="top:84.5px"><b>scaleEffect</b>(x: CGFloat, y: CGFloat, anchor: UnitPoint)</div>
  <div class="abs" style="left:0;top:132.5px;width:416px;height:29.5px;background:#ebebeb;border-top:0.5px solid #e2e2e2"></div>
  <div class="abs" style="left:8px;top:136px;width:21.5px;height:21.5px;border-radius:5px;background:#3478f6;color:#fff;font-weight:bold;font-size:13px;text-align:center;line-height:21.5px;box-shadow:0 0 0 1px #fff4d8">M</div>
  <div class="abs mono" style="left:35px;top:138.5px;font-size:7.7px;font-weight:bold;color:#222">scaleEffect()</div>
  <div class="abs" style="left:35px;top:147.3px;font-size:7.9px;color:#888;white-space:nowrap">Scales this view’s rendered output by the given horizontal and vertical amounts, relative to an anchor point.</div>
</div>
<div id="dock">
<svg class="ic" style="left:6.0px" viewBox="0 0 28 28"><defs><linearGradient id="fdb" x1="0" y1="0" x2="0" y2="1"><stop offset="0" stop-color="#5ac0fa"/><stop offset="1" stop-color="#1d7ee8"/></linearGradient></defs>
<rect x="0" y="0" width="28" height="28" rx="6.3" fill="#e9e9ec"/>
<path d="M6.3,0 H15.5 C13.8,4 12.6,9 12.2,14.8 L15.2,15 C15,19 15.6,24 16.5,28 H6.3 Q0,28 0,21.7 V6.3 Q0,0 6.3,0 Z" fill="url(#fdb)"/>
<ellipse cx="8" cy="9.3" rx="0.75" ry="1.4" fill="#222"/><ellipse cx="20" cy="9.3" rx="0.75" ry="1.4" fill="#222"/>
<path d="M5.5,17.5 Q14,23.5 22.5,17.5" fill="none" stroke="#222" stroke-width="1"/></svg>
<svg class="ic" style="left:43.5px" viewBox="0 0 28 28"><rect x="0" y="0" width="28" height="28" rx="6.3" fill="#ddd6ee"/>
<rect x="4.5" y="4.6" width="5" height="5" rx="1.2" fill="#4ccc3a"/><rect x="11.5" y="4.6" width="5" height="5" rx="1.2" fill="#f7b500"/><rect x="18.5" y="4.6" width="5" height="5" rx="1.2" fill="#f08020"/><rect x="4.5" y="11.6" width="5" height="5" rx="1.2" fill="#d82a1a"/><rect x="11.5" y="11.6" width="5" height="5" rx="1.2" fill="#9aa0a0"/><rect x="18.5" y="11.6" width="5" height="5" rx="1.2" fill="#f04050"/><rect x="4.5" y="18.6" width="5" height="5" rx="1.2" fill="#8a3ad0"/><rect x="11.5" y="18.6" width="5" height="5" rx="1.2" fill="#2a90f0"/><rect x="18.5" y="18.6" width="5" height="5" rx="1.2" fill="#40c080"/></svg>
<svg class="ic" style="left:81.0px" viewBox="0 0 28 28"><rect x="0" y="0" width="28" height="28" rx="6.3" fill="#f4f4f4"/>
<circle cx="14" cy="14" r="11" fill="#2a86ee"/><circle cx="14" cy="14" r="9.6" fill="none" stroke="#9cd0ff" stroke-width="0.6" stroke-dasharray="0.6 1.2"/>
<path d="M21,7 L15.3,15.3 L12.7,12.7 Z" fill="#f0403a"/><path d="M7,21 L12.7,12.7 L15.3,15.3 Z" fill="#fff"/></svg>
<svg class="ic" style="left:118.5px" viewBox="0 0 28 28"><defs><linearGradient id="msg" x1="0" y1="0" x2="0" y2="1"><stop offset="0" stop-color="#6ee46a"/><stop offset="1" stop-color="#2fbf3a"/></linearGradient></defs>
<rect x="0" y="0" width="28" height="28" rx="6.3" fill="url(#msg)"/>
<ellipse cx="14" cy="13" rx="9.5" ry="7.8" fill="#fff"/><path d="M8,18 Q8,22 6,23 Q10,23 12,20 Z" fill="#fff"/></svg>
<svg class="ic" style="left:156.0px" viewBox="0 0 28 28"><defs><linearGradient id="ml" x1="0" y1="0" x2="0" y2="1"><stop offset="0" stop-color="#3aa6fb"/><stop offset="1" stop-color="#1f70f0"/></linearGradient></defs>
<rect x="0" y="0" width="28" height="28" rx="6.3" fill="url(#ml)"/>
<rect x="5" y="8.5" width="18" height="12" rx="1" fill="#f4f4f6"/><path d="M5.3,9 L14,15.5 L22.7,9" fill="none" stroke="#c0c4cc" stroke-width="0.8"/></svg>
<svg class="ic" style="left:193.5px" viewBox="0 0 28 28"><rect x="0" y="0" width="28" height="28" rx="6.3" fill="#f4f2ee"/>
<path d="M14,0 H21.7 Q28,0 28,6.3 V20 L16,13 Z" fill="#86d47e"/><path d="M0,6 L7,10 L0,14 Z" fill="#86d47e"/>
<circle cx="24" cy="5" r="6" fill="none" stroke="#e8e8e8" stroke-width="2.2"/>
<path d="M0,17 L8,20 L6,28 H6.3 Q0,28 0,21.7 Z" fill="#eea0c8"/><path d="M17,22 L28,17 V21.7 Q28,28 21.7,28 H16 Z" fill="#f6d040"/>
<path d="M7.5,0 H12 V15 H7.5 Z" fill="#3d8cf0"/>
<circle cx="10.5" cy="18.5" r="6" fill="#fff"/><circle cx="10.5" cy="18.5" r="4.9" fill="#2f7df2"/><path d="M10.5,14.8 L13,21.5 L10.5,19.8 L8,21.5 Z" fill="#fff"/></svg>
<svg class="ic" style="left:231.0px" viewBox="0 0 28 28"><rect x="0" y="0" width="28" height="28" rx="6.3" fill="#fafafa"/><ellipse cx="14" cy="8.6" rx="3.5" ry="5.3" fill="#f5a623" opacity="0.82" transform="rotate(0 14 14)"/><ellipse cx="14" cy="8.6" rx="3.5" ry="5.3" fill="#f3d040" opacity="0.82" transform="rotate(45 14 14)"/><ellipse cx="14" cy="8.6" rx="3.5" ry="5.3" fill="#98cc48" opacity="0.82" transform="rotate(90 14 14)"/><ellipse cx="14" cy="8.6" rx="3.5" ry="5.3" fill="#44b8a0" opacity="0.82" transform="rotate(135 14 14)"/><ellipse cx="14" cy="8.6" rx="3.5" ry="5.3" fill="#4a94e4" opacity="0.82" transform="rotate(180 14 14)"/><ellipse cx="14" cy="8.6" rx="3.5" ry="5.3" fill="#7a70d4" opacity="0.82" transform="rotate(225 14 14)"/><ellipse cx="14" cy="8.6" rx="3.5" ry="5.3" fill="#b466c4" opacity="0.82" transform="rotate(270 14 14)"/><ellipse cx="14" cy="8.6" rx="3.5" ry="5.3" fill="#e8453e" opacity="0.82" transform="rotate(315 14 14)"/></svg>
<svg class="ic" style="left:268.5px" viewBox="0 0 28 28"><defs><linearGradient id="ft" x1="0" y1="0" x2="0" y2="1"><stop offset="0" stop-color="#6ae070"/><stop offset="1" stop-color="#2ab84a"/></linearGradient></defs>
<rect x="0" y="0" width="28" height="28" rx="6.3" fill="url(#ft)"/>
<rect x="5" y="9" width="12.5" height="10" rx="2.5" fill="#fff"/><path d="M18.5,12.5 L23,9.5 V18.5 L18.5,15.5 Z" fill="#fff"/></svg>
<svg class="ic" style="left:306.0px" viewBox="0 0 28 28"><rect x="0" y="0" width="28" height="28" rx="6.3" fill="#fdfdfd"/>
<path d="M6.3,0 H21.7 Q28,0 28,6.3 V8 H0 V6.3 Q0,0 6.3,0 Z" fill="#f0473a"/>
<text x="14" y="6.4" text-anchor="middle" font-family="Liberation Sans" font-weight="bold" font-size="5" fill="#fff">SEP</text>
<text x="14" y="23.5" text-anchor="middle" font-family="Liberation Sans" font-size="14" fill="#222">14</text></svg>
<svg class="ic" style="left:343.5px" viewBox="0 0 28 28"><rect x="0" y="0" width="28" height="28" rx="6.3" fill="#a58558"/><rect x="25" y="7" width="3" height="4" fill="#f0a030"/><rect x="25" y="12" width="3" height="4" fill="#40a0f0"/><rect x="25" y="17" width="3" height="4" fill="#f06040"/>
<circle cx="13.5" cy="13.5" r="8" fill="none" stroke="#8a6a42" stroke-width="1.1"/><circle cx="13.5" cy="11" r="2.8" fill="#8a6a42"/><path d="M8.5,19 Q13.5,13.5 18.5,19" fill="#8a6a42"/></svg>
<svg class="ic" style="left:381.0px" viewBox="0 0 28 28"><rect x="0" y="0" width="28" height="28" rx="6.3" fill="#fbfbfb"/>
<circle cx="7.5" cy="8" r="1.8" fill="#2a80f0"/><circle cx="7.5" cy="14" r="1.8" fill="#f0403a"/><circle cx="7.5" cy="20" r="1.8" fill="#f09020"/>
<path d="M11,8 H23 M11,14 H23 M11,20 H23" stroke="#d8d8d8" stroke-width="0.8"/></svg>
<svg class="ic" style="left:418.5px" viewBox="0 0 28 28"><rect x="0" y="0" width="28" height="28" rx="6.3" fill="#f5f2ea"/>
<path d="M6.3,0 H21.7 Q28,0 28,6.3 V8 H0 V6.3 Q0,0 6.3,0 Z" fill="#fbd04a"/>
<path d="M2,13 H26 M2,18 H26 M2,23 H26" stroke="#e0ddd4" stroke-width="0.5"/></svg>
<svg class="ic" style="left:456.0px" viewBox="0 0 28 28"><rect x="0" y="0" width="28" height="28" rx="6.3" fill="#1a1c1c"/>
<path transform="translate(3.2,8.6) scale(0.0235)" d="M318.7 268.7c-.2-36.7 16.4-64.4 50-84.8-18.8-26.9-47.2-41.7-84.7-44.6-35.5-2.8-74.3 20.7-88.5 20.7-15 0-49.4-19.7-76.4-19.7C63.3 141.2 4 184.8 4 273.5q0 39.3 14.4 81.2c12.8 36.7 59 126.7 107.2 125.2 25.2-.6 43-17.9 75.8-17.9 31.8 0 48.3 17.9 76.4 17.9 48.6-.7 90.4-82.5 102.6-119.3-65.2-30.7-61.7-90-61.7-91.9zm-56.6-164.2c27.3-32.4 24.8-61.9 24-72.5-24.1 1.4-52 16.4-67.9 34.9-17.5 19.8-27.8 44.3-25.6 71.9 26.1 2 49.9-11.4 69.5-34.3z" fill="#fff"/>
<text x="13" y="18.2" font-family="Liberation Sans" font-weight="bold" font-size="10.5" fill="#fff">tv</text></svg>
<svg class="ic" style="left:493.5px" viewBox="0 0 28 28"><defs><linearGradient id="mu" x1="0" y1="0" x2="0" y2="1"><stop offset="0" stop-color="#fa5a6e"/><stop offset="1" stop-color="#e8303e"/></linearGradient></defs>
<rect x="0" y="0" width="28" height="28" rx="6.3" fill="url(#mu)"/>
<path d="M11,8.5 L19.5,6.5 V17.5" fill="none" stroke="#fff" stroke-width="1.8"/><path d="M11,8.5 V19.5" stroke="#fff" stroke-width="1.8"/><ellipse cx="9" cy="19.8" rx="2.6" ry="2.1" fill="#fff"/><ellipse cx="17.5" cy="17.8" rx="2.6" ry="2.1" fill="#fff"/></svg>
<svg class="ic" style="left:531.0px" viewBox="0 0 28 28"><defs><linearGradient id="pc" x1="0" y1="0" x2="0" y2="1"><stop offset="0" stop-color="#b86ae8"/><stop offset="1" stop-color="#8a3ac8"/></linearGradient></defs>
<rect x="0" y="0" width="28" height="28" rx="6.3" fill="url(#pc)"/>
<circle cx="14" cy="12.5" r="8" fill="none" stroke="#fff" stroke-width="1.4"/><circle cx="14" cy="12.5" r="4.8" fill="none" stroke="#fff" stroke-width="1.3"/><circle cx="14" cy="12" r="2.1" fill="#fff"/><rect x="12.6" y="15" width="2.8" height="8" rx="1.4" fill="#fff"/></svg>
<svg class="ic" style="left:568.5px" viewBox="0 0 28 28"><rect x="0" y="0" width="28" height="28" rx="6.3" fill="#fafafa"/>
<path d="M6,7 H10 L22,19 V22 H18 L6,10 Z M6,12 L15,21 V22 H6 Z M13,6 H22 V15 Z" fill="#f0445a"/></svg>
<svg class="ic" style="left:606.0px" viewBox="0 0 28 28"><defs><linearGradient id="kn" x1="0" y1="0" x2="0" y2="1"><stop offset="0" stop-color="#4fb4fb"/><stop offset="1" stop-color="#1f78f0"/></linearGradient></defs>
<rect x="0" y="0" width="28" height="28" rx="6.3" fill="url(#kn)"/>
<rect x="6" y="5.5" width="16" height="7" rx="0.8" fill="#fff"/><circle cx="14" cy="9" r="2.2" fill="#f09030"/><path d="M14,9 L14,6.8 A2.2,2.2 0 0 1 16.2,9 Z" fill="#40a0f0"/>
<path d="M10,12.5 H18 L17,14 H11 Z" fill="#e8eef8"/><rect x="13.3" y="14" width="1.4" height="8" fill="#e8eef8"/><rect x="10" y="22" width="8" height="1.3" rx="0.6" fill="#e8eef8"/></svg>
<svg class="ic" style="left:643.5px" viewBox="0 0 28 28"><defs><linearGradient id="nm" x1="0" y1="0" x2="0" y2="1"><stop offset="0" stop-color="#62d85a"/><stop offset="1" stop-color="#2ab83a"/></linearGradient></defs>
<rect x="0" y="0" width="28" height="28" rx="6.3" fill="url(#nm)"/>
<rect x="6" y="17" width="2.6" height="6" rx="1.3" fill="#fff"/><rect x="10.5" y="13" width="2.6" height="10" rx="1.3" fill="#fff"/><rect x="15" y="5" width="2.6" height="18" rx="1.3" fill="#fff"/><rect x="19.5" y="9" width="2.6" height="14" rx="1.3" fill="#fff"/></svg>
<svg class="ic" style="left:681.0px" viewBox="0 0 28 28"><defs><linearGradient id="pg" x1="0" y1="0" x2="0" y2="1"><stop offset="0" stop-color="#fbb04a"/><stop offset="1" stop-color="#f08a20"/></linearGradient></defs>
<rect x="0" y="0" width="28" height="28" rx="6.3" fill="url(#pg)"/>
<path d="M20.5,5 Q22.5,6 21.5,8 L10,21 L7,22.5 L7.8,19.5 Z" fill="#fff"/><path d="M9,23.5 H22" stroke="#fcd8a8" stroke-width="0.9"/></svg>
<svg class="ic" style="left:718.5px" viewBox="0 0 28 28"><defs><linearGradient id="as" x1="0" y1="0" x2="0" y2="1"><stop offset="0" stop-color="#3ab4fb"/><stop offset="1" stop-color="#1f6ef0"/></linearGradient></defs>
<rect x="0" y="0" width="28" height="28" rx="6.3" fill="url(#as)"/>
<path d="M11.5,6 L19.5,20.5 M16.5,6 L8.5,20.5 M6,17 H22 M19,20.5 L21.5,23.5 M9,20.5 L6.5,23.5" stroke="#fff" stroke-width="1.8" stroke-linecap="round"/></svg>
<svg class="ic" style="left:756.0px" viewBox="0 0 28 28"><defs><linearGradient id="sp" x1="0" y1="0" x2="0" y2="1"><stop offset="0" stop-color="#9a9ea4"/><stop offset="1" stop-color="#6a6e74"/></linearGradient></defs>
<rect x="0" y="0" width="28" height="28" rx="6.3" fill="url(#sp)"/>
<circle cx="14" cy="14" r="10" fill="#3a3c40"/><circle cx="14" cy="14" r="8" fill="none" stroke="#a8acb0" stroke-width="1.5"/><circle cx="14" cy="14" r="3.2" fill="none" stroke="#a8acb0" stroke-width="1.4"/>
<path d="M14,10.8 V6 M11.2,15.6 L7.1,18 M16.8,15.6 L20.9,18" stroke="#a8acb0" stroke-width="1.4"/></svg>
<svg class="ic" style="left:810px" viewBox="0 0 28 28"><rect x="0" y="0" width="28" height="28" rx="6.3" fill="#fcfaf6"/>
<defs><linearGradient id="swg" x1="0" y1="0" x2="0" y2="1"><stop offset="0" stop-color="#f8a040"/><stop offset="1" stop-color="#e84a20"/></linearGradient></defs>
<path d="M4.5,14.5 C9,19.5 15,20.5 19,18 C20.5,19 21.8,20.5 23,22 C24,19.5 23.8,17 22.5,15 C23.5,11 22,8 19.5,5.5 C20.5,8.5 20.3,11 19,13 C15.5,10.5 11.5,7.5 8.5,5 C11,8 13.5,10.5 16,12.5 C12.5,11 9.5,9 7,7 C9.5,10.5 13,13.5 16.5,15.5 C12.5,16.5 8.5,16.3 4.5,14.5 Z" fill="url(#swg)"/></svg>
<svg class="ic" style="left:862.3px;width:33px;height:30px;top:5px" viewBox="0 0 28 28" preserveAspectRatio="none"><path d="M1,5.5 Q1,4 2.5,4 H10 L12,6 H25.5 Q27,6 27,7.5 V9 H1 Z" fill="#4aa8d8"/>
<rect x="1" y="7.5" width="26" height="17.5" rx="1.5" fill="#7cc6f0"/>
<circle cx="14" cy="16" r="4.5" fill="#58a8e0"/><path d="M14,13.2 V18.3 M12,16.5 L14,18.5 L16,16.5" fill="none" stroke="#9ad2f4" stroke-width="1"/></svg>
<svg class="ic" style="left:903px;width:26px;top:4px;height:32px" viewBox="0 0 26 28" preserveAspectRatio="none"><path d="M2,4.5 H24 L21.5,25 Q21.3,27 19,27 H7 Q4.7,27 4.5,25 Z" fill="#e4e4e6"/>
<ellipse cx="13" cy="4.5" rx="11" ry="2.6" fill="#cfc2e0"/><ellipse cx="13" cy="4.5" rx="11" ry="2.6" fill="none" stroke="#f4f4f4" stroke-width="0.8"/>
<path d="M6,8 L7.5,25" stroke="#f4f4f6" stroke-width="1.2" opacity=".7"/></svg>
<div class="abs" style="left:797.6px;top:6px;width:0.9px;height:32px;background:rgba(70,20,140,.55)"></div>
<div class="abs" style="left:851.6px;top:6px;width:0.9px;height:32px;background:rgba(70,20,140,.55)"></div>
<div class="abs" style="left:18.5px;top:40.5px;width:3px;height:3px;border-radius:50%;background:#1a1030"></div>
<div class="abs" style="left:822.5px;top:40.5px;width:3px;height:3px;border-radius:50%;background:#1a1030"></div>
</div>
</body></html>
